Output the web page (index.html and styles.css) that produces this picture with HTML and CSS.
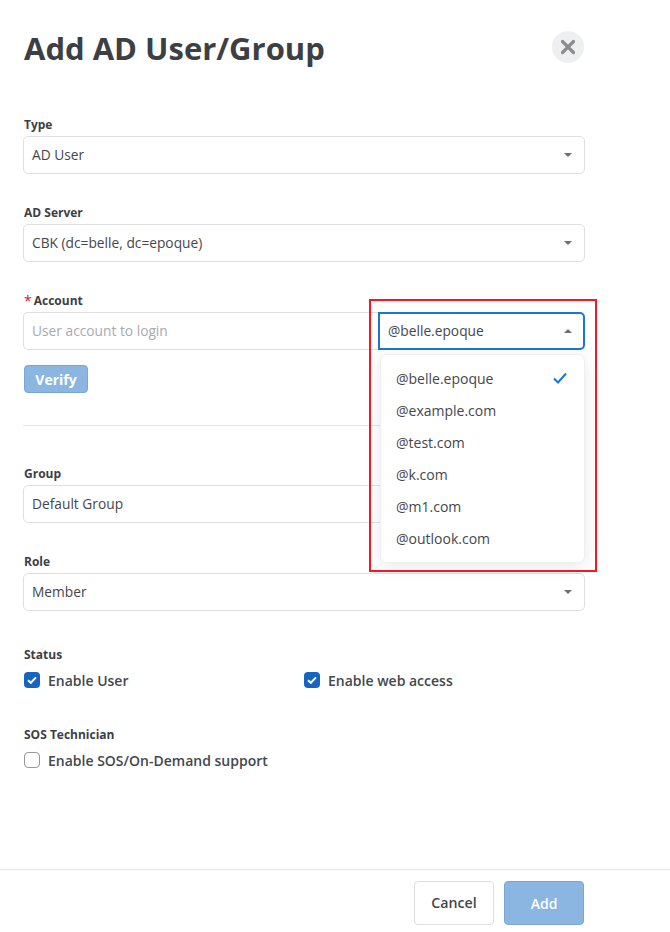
FILE: index.html
```html
<!DOCTYPE html>
<html lang="en">
<head>
<meta charset="utf-8">
<title>Add AD User/Group</title>
<link rel="stylesheet" href="styles.css">
</head>
<body>
<div class="dialog">
  <header class="head">
    <h1 class="title">Add AD User/Group</h1>
    <button class="close" aria-label="Close">
      <svg viewBox="0 0 16 16" width="16" height="16"><path d="M2.5 2.5l11 11M13.5 2.5l-11 11" stroke="#8c8c8f" stroke-width="3.2" stroke-linecap="round" fill="none"/></svg>
    </button>
  </header>
  <main class="form">
    <div class="field">
      <div class="label">Type</div>
      <div class="box"><span class="value">AD User</span><i class="caret"></i></div>
    </div>
    <div class="field">
      <div class="label">AD Server</div>
      <div class="box"><span class="value">CBK (dc=belle, dc=epoque)</span><i class="caret"></i></div>
    </div>
    <div class="field account">
      <div class="label label-req"><span class="star">*</span>Account</div>
      <div class="account-row">
        <div class="box account-input"><span class="placeholder">User account to login</span></div>
        <div class="domain">
          <div class="domain-box"><span class="value">@belle.epoque</span><i class="caret up"></i></div>
          <ul class="menu">
            <li class="option">@belle.epoque<svg class="tick" viewBox="0 0 16 14" width="16" height="14"><path d="M2 7.5l4 4 8-9" stroke="#1976d2" stroke-width="2" fill="none"/></svg></li>
            <li class="option">@example.com</li>
            <li class="option">@test.com</li>
            <li class="option">@k.com</li>
            <li class="option">@m1.com</li>
            <li class="option">@outlook.com</li>
          </ul>
          <div class="annotation"></div>
        </div>
      </div>
      <button class="verify">Verify</button>
    </div>
    <hr class="rule">
    <div class="field">
      <div class="label">Group</div>
      <div class="box"><span class="value">Default Group</span><i class="caret"></i></div>
    </div>
    <div class="field">
      <div class="label">Role</div>
      <div class="box"><span class="value">Member</span><i class="caret"></i></div>
    </div>
    <div class="field status">
      <div class="label">Status</div>
      <div class="checks">
        <label class="check"><span class="cb on"><svg viewBox="0 0 16 16" width="16" height="16"><path d="M4 8.2l2.8 2.6L12 5.4" stroke="#fff" stroke-width="2" fill="none"/></svg></span>Enable User</label>
        <label class="check"><span class="cb on"><svg viewBox="0 0 16 16" width="16" height="16"><path d="M4 8.2l2.8 2.6L12 5.4" stroke="#fff" stroke-width="2" fill="none"/></svg></span>Enable web access</label>
      </div>
    </div>
    <div class="field">
      <div class="label">SOS Technician</div>
      <div class="checks">
        <label class="check wide"><span class="cb"></span>Enable SOS/On-Demand support</label>
      </div>
    </div>
  </main>
  <footer class="foot">
    <button class="btn cancel">Cancel</button>
    <button class="btn add">Add</button>
  </footer>
</div>
</body>
</html>
```
FILE: styles.css
```css
* { box-sizing: border-box; }
html, body { margin: 0; padding: 0; background: #fff; }
body { font-family: "Open Sans", "Liberation Sans", sans-serif; color: #44474b; }
.dialog { width: 670px; height: 932px; display: flex; flex-direction: column; overflow: hidden; }
.head { height: 114px; padding: 26px 86px 0 24px; display: flex; justify-content: space-between; align-items: flex-start; }
.title { margin: 0; font-size: 31px; line-height: 44px; font-weight: 700; color: #3c3f43; }
.close { width: 32px; height: 32px; margin-top: 5px; border: 0; padding: 0; border-radius: 50%; background: #eeeff1; display: flex; align-items: center; justify-content: center; }
.form { flex: 1; width: 585px; padding-left: 23px; display: flex; flex-direction: column; gap: 28px; }
.label { height: 22px; line-height: 22px; font-size: 12px; font-weight: 700; color: #3c3f43; padding-left: 1px; }
.label-req { display: flex; align-items: center; }
.star { color: #b3262e; font-size: 14px; font-weight: 400; margin-right: 2px; }
.box { height: 38px; border: 1px solid #dfdfe1; border-radius: 5px; display: flex; align-items: center; justify-content: space-between; padding: 0 12px 2px 8px; font-size: 13.75px; background: #fff; }
.placeholder { color: #a8aaad; }
.caret { width: 0; height: 0; margin-top: 2px; border-left: 4px solid transparent; border-right: 4px solid transparent; border-top: 4px solid #6e6e72; }
.caret.up { border-top: 0; border-bottom: 4px solid #6e6e72; }
.account-row { display: flex; }
.account-input { flex: 1; padding-left: 8px; border-radius: 5px 0 0 5px; border-right: 0; }
.domain { position: relative; width: 207px; }
.domain-box { height: 38px; border: 2px solid #1976d2; border-radius: 0 5px 5px 0; display: flex; align-items: center; justify-content: space-between; padding: 0 11px 2px 8px; font-size: 13.75px; background: #fff; }
.menu { position: absolute; left: 2px; top: 42px; width: 205px; height: 209px; margin: 0; padding: 8px 0; list-style: none; background: #fff; border: 1px solid #eeeff1; border-radius: 7px; box-shadow: 0 4px 16px rgba(30, 40, 60, .1); }
.option { height: 32px; padding: 0 16px 2px 15px; display: flex; align-items: center; justify-content: space-between; font-size: 14px; }
.annotation { position: absolute; left: -9px; top: -13px; width: 228px; height: 273px; border: 2px solid #ed1c24; pointer-events: none; }
.verify { display: block; margin: 15px 0 0 1px; width: 64px; height: 28px; padding: 0; border: 1px solid #7ba5d3; border-radius: 4px; background: #8ab6e1; color: #fff; font: 700 14px "Open Sans", sans-serif; }
.rule { margin: 4px 0 9px; border: 0; border-top: 1px solid #e3e3e5; height: 0; width: 562px; }
.status { margin-top: 5px; }
.status .checks { margin-bottom: 2px; }
.checks { display: flex; height: 28px; align-items: center; }
.check { width: 280px; padding-left: 1px; display: flex; align-items: center; gap: 8px; font-size: 14px; font-weight: 600; }
.check.wide { width: 400px; }
.cb { width: 16px; height: 16px; border: 1px solid #9a9a9e; border-radius: 4px; display: block; background: #fff; }
.cb.on { background: #1565c0; border: 0; }
.cb svg { display: block; }
.foot { height: 63px; border-top: 1px solid #e3e3e5; padding: 11px 86px 0 0; display: flex; justify-content: flex-end; align-items: flex-start; gap: 10px; }
.btn { width: 80px; height: 44px; border-radius: 4px; font: 600 14px "Open Sans", sans-serif; padding: 0; }
.cancel { background: #fff; border: 1px solid #dfdfe1; color: #44474b; padding-bottom: 2px; font-size: 14.2px; }
.add { background: #8ab6e1; border: 1px solid #7ba5d3; color: #fff; }
```
